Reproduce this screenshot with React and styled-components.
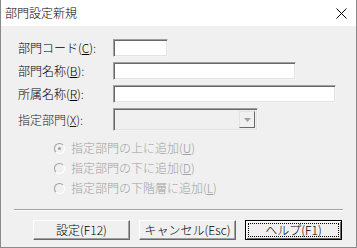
import React from 'react';
import styled, { createGlobalStyle } from 'styled-components';

const GlobalStyle = createGlobalStyle`
  html, body {
    margin: 0;
    padding: 0;
    background: #ffffff;
  }
  * {
    box-sizing: border-box;
  }
`;

const Window = styled.div`
  width: 357px;
  height: 248px;
  display: flex;
  flex-direction: column;
  border: 1px solid #8a8a8a;
  border-top: none;
  font-family: "Noto Sans CJK JP", "Liberation Sans", sans-serif;
  font-size: 12px;
  font-weight: 300;
  color: #000;
`;

const TitleBar = styled.div`
  height: 26px;
  flex: none;
  background: #ffffff;
  display: flex;
  align-items: center;
  justify-content: space-between;
  padding: 0 9px 0 4px;
  font-size: 12px;
  line-height: 1;
`;

const Body = styled.div`
  flex: 1;
  background: #f0f0f0;
  padding: 13px 12px 0 12px;
  display: flex;
  flex-direction: column;
`;

const Form = styled.div`
  display: grid;
  grid-template-columns: 95px 1fr;
  row-gap: 5px;
  padding-left: 5px;
  align-items: center;
`;

const Label = styled.div`
  line-height: 1;
  white-space: nowrap;
  color: ${p => (p.$muted ? '#222' : '#000')};
`;

const Key = styled.span`
  text-decoration: underline;
`;

const Field = styled.div`
  width: ${p => p.$w}px;
  height: ${p => p.$h || 18}px;
  background: ${p => (p.$disabled ? '#f0f0f0' : '#ffffff')};
  border: 1px solid;
  border-color: #a0a0a0 #f4f4f4 #f4f4f4 #a0a0a0;
  box-shadow: inset 1px 1px 0 #696969, inset -1px -1px 0 #e3e3e3;
  display: flex;
  justify-content: flex-end;
  padding: 2px;
`;

const DropButton = styled.div`
  width: 16px;
  height: 100%;
  background: #f0f0f0;
  border: 1px solid;
  border-color: #e3e3e3 #696969 #696969 #e3e3e3;
  display: flex;
  align-items: center;
  justify-content: center;
`;

const RadioGroup = styled.div`
  margin-top: 7px;
  padding-left: 41px;
  display: flex;
  flex-direction: column;
`;

const RadioRow = styled.div`
  height: 20px;
  display: flex;
  align-items: center;
  gap: 6px;
  color: #a0a0a0;
  line-height: 1;
`;

const Dot = styled.div`
  width: 11px;
  height: 11px;
  border-radius: 50%;
  border: 1px solid;
  border-color: #a0a0a0 #ffffff #ffffff #a0a0a0;
  background: #f0f0f0;
  display: flex;
  align-items: center;
  justify-content: center;
  &::after {
    content: '';
    width: 3px;
    height: 3px;
    border-radius: 50%;
    background: ${p => (p.$on ? '#a0a0a0' : 'transparent')};
  }
`;

const Separator = styled.div`
  margin-top: 11px;
  margin-left: 1px;
  margin-right: 1px;
  height: 2px;
  border-top: 1px solid #a0a0a0;
  border-bottom: 1px solid #ffffff;
`;

const ButtonRow = styled.div`
  margin-top: 9px;
  padding-left: 20px;
  display: flex;
  gap: 9px;
`;

const Button = styled.div`
  width: 97px;
  height: 20px;
  background: #f0f0f0;
  border: 1px solid;
  border-color: ${p => (p.$focus ? '#000' : '#ffffff #696969 #696969 #ffffff')};
  box-shadow: ${p => (p.$focus
    ? 'inset 1px 1px 0 #ffffff, inset -1px -1px 0 #696969'
    : 'inset -1px -1px 0 #a0a0a0')};
  display: flex;
  align-items: center;
  justify-content: center;
  line-height: 1;
  padding: 2px;
`;

const FocusRing = styled.div`
  width: 100%;
  height: 100%;
  border: 1px dotted #000;
  display: flex;
  align-items: center;
  justify-content: center;
`;

const CloseIcon = () => (
  <svg width="11" height="11" viewBox="0 0 11 11">
    <path d="M0.5 0.5 L10.5 10.5 M10.5 0.5 L0.5 10.5" stroke="#000" strokeWidth="1" />
  </svg>
);

const options = [
  { text: '指定部門の上に追加', key: 'U', on: true },
  { text: '指定部門の下に追加', key: 'D' },
  { text: '指定部門の下階層に追加', key: 'L' },
];

export default function App() {
  return (
    <>
      <GlobalStyle />
      <Window>
        <TitleBar>
          <span>部門設定新規</span>
          <CloseIcon />
        </TitleBar>
        <Body>
          <Form>
            <Label>部門コード(<Key>C</Key>):</Label>
            <Field $w={55} />
            <Label>部門名称(<Key>B</Key>):</Label>
            <Field $w={183} />
            <Label>所属名称(<Key>R</Key>):</Label>
            <Field $w={223} />
            <Label $muted>指定部門(<Key>X</Key>):</Label>
            <Field $w={145} $h={23} $disabled>
              <DropButton>
                <svg width="7" height="4" viewBox="0 0 7 4">
                  <path d="M0 0 H7 L3.5 4 Z" fill="#a0a0a0" />
                </svg>
              </DropButton>
            </Field>
          </Form>
          <RadioGroup>
            {options.map(o => (
              <RadioRow key={o.key}>
                <Dot $on={o.on} />
                <span>{o.text}(<Key>{o.key}</Key>)</span>
              </RadioRow>
            ))}
          </RadioGroup>
          <Separator />
          <ButtonRow>
            <Button>設定(F12)</Button>
            <Button>キャンセル(Esc)</Button>
            <Button $focus>
              <FocusRing>ヘルプ(F1)</FocusRing>
            </Button>
          </ButtonRow>
        </Body>
      </Window>
    </>
  );
}
